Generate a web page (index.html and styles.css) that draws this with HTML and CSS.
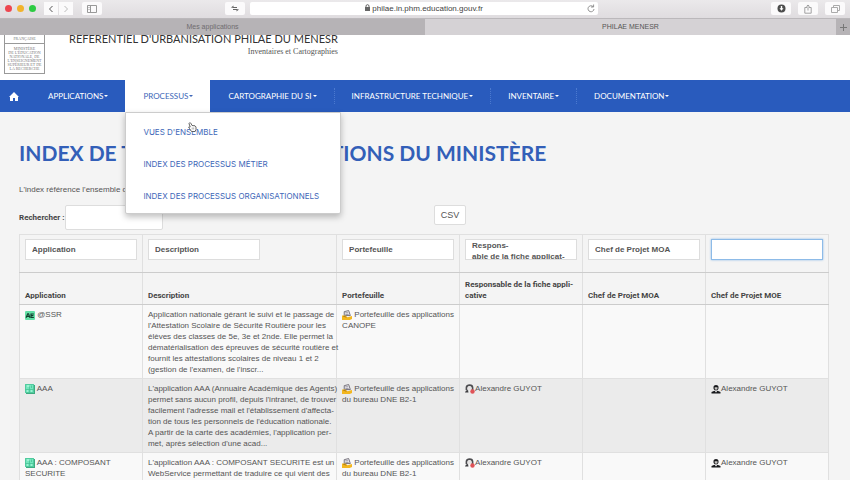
FILE: index.html
```html
<!DOCTYPE html>
<html lang="fr">
<head>
    <meta charset="UTF-8">
    <meta name="viewport" content="width=device-width, initial-scale=1.0">
    <title>PHILAE MENESR</title>
    <link rel="stylesheet" href="styles.css">
</head>
<body>
    <!-- icons used several times -->
    <svg class="sprite" aria-hidden="true">
        <symbol id="icon-ae" viewBox="0 0 9 9">
            <rect x="0" y="1" width="9" height="8" rx="1" fill="#62dfa5"/>
            <path d="M1 7L2.4 3.4H3.2L4.4 7M1.7 5.7H4M8 3.6H5.4V6.7H8M5.4 5.1H7.6" fill="none" stroke="#123d2c" stroke-width="1"/>
        </symbol>
        <symbol id="icon-app" viewBox="0 0 10 10">
            <rect x="1" y="1" width="9" height="9" fill="#3dab80"/>
            <rect x="0" y="0" width="9" height="9" fill="#74e6bd"/>
            <path d="M.5 .5H8.5V8.5H.5ZM.5 5.5H8.5M4.5 2.5V8.5M6.5 1.5V4" fill="none" stroke="#42bd90" stroke-width=".7"/>
            <path d="M2 2H4M2 7H3M6 7H7" stroke="#c9fbe6"/>
        </symbol>
        <symbol id="icon-portfolio" viewBox="0 0 9 9">
            <path d="M2 1.5L6 .5L7.5 5H2Z" fill="#ececf2" stroke="#6a6570" stroke-width=".8"/>
            <path d="M3 2.5H5.5M3 4H6" stroke="#77717d" stroke-width=".6"/>
            <path d="M0 5L3 5L5 6.5L9 5.5V8L7 9H0Z" fill="#f3b71f"/>
            <path d="M1 5.5L4 6.5" stroke="#a4700f" stroke-width=".7"/>
        </symbol>
        <symbol id="icon-owner" viewBox="0 0 10 10">
            <path d="M1.5 6V3.5C1.5 .2 7.5 .2 7.5 3.5V6" fill="none" stroke="#4d4d50" stroke-width="1.8"/>
            <circle cx="4.5" cy="4.2" r="2" fill="#e6e4e4"/>
            <path d="M0 8.5L1 6.5L3 6L3.5 8.5Z" fill="#3d3d40"/>
            <circle cx="7.5" cy="7.5" r="2.2" fill="#df5358"/>
        </symbol>
        <symbol id="icon-manager" viewBox="0 0 9 10">
            <path d="M2 3C2 .2 7 .2 7 3V4.5C6.5 7 2.5 7 2 4.5Z" fill="#17181b"/>
            <path d="M3.2 3.3H6V4.8C5.5 6 3.7 6 3.2 4.8Z" fill="#c7c4c2"/>
            <path d="M0 9.5V8L3 6.8L4.5 8L6 6.8L9 8V9.5Z" fill="#17181b"/>
            <path d="M4 7L4.5 9L5 7Z" fill="#fff"/>
        </symbol>
    </svg>

    <header class="browser">
        <div class="toolbar">
            <div class="lights">
                <span class="light red"></span>
                <span class="light yellow"></span>
                <span class="light green"></span>
            </div>
            <div class="history">
                <button type="button" aria-label="Précédent"><svg width="6" height="8" viewBox="0 0 6 8"><path d="M4.5 1L1.5 4L4.5 7" fill="none" stroke="#555" stroke-width="1"/></svg></button>
                <button type="button" aria-label="Suivant"><svg width="6" height="8" viewBox="0 0 6 8"><path d="M1.5 1L4.5 4L1.5 7" fill="none" stroke="#bbb" stroke-width="1"/></svg></button>
            </div>
            <button type="button" class="tool" aria-label="Barre latérale"><svg width="10" height="8" viewBox="0 0 10 8"><path d="M.5 .5H9.5V7.5H.5ZM3.5 .5V7.5M1.5 2.5H2.5M1.5 4.5H2.5" fill="none" stroke="#999"/></svg></button>
            <div class="location">
                <button type="button" class="tool" aria-label="Réglages"><svg width="8" height="7" viewBox="0 0 8 7"><path d="M6 2.5H2M2 4.5H6" stroke="#666"/><path d="M0 2.5L2.5 .5V3ZM8 4.5L5.5 4V6.5Z" fill="#666"/></svg></button>
                <div class="address">
                    <span class="url">
                        <svg width="5" height="7" viewBox="0 0 5 7"><path d="M1 3V2C1 .2 4 .2 4 2V3" fill="none" stroke="#666"/><rect y="3" width="5" height="4" fill="#666"/></svg>
                        philae.in.phm.education.gouv.fr
                    </span>
                    <button type="button" class="reload" aria-label="Recharger"><svg width="8" height="9" viewBox="0 0 8 9"><path d="M6 2.5A3 3 0 1 0 7 5" fill="none" stroke="#777" stroke-width=".8"/><path d="M4 3H6.6V.5" fill="none" stroke="#777" stroke-width=".8"/></svg></button>
                </div>
            </div>
            <div class="tools">
                <button type="button" class="tool" aria-label="Téléchargements"><svg width="9" height="9" viewBox="0 0 9 9"><circle cx="4.5" cy="4.5" r="4" fill="#4c4c4c"/><path d="M4.5 2V5" stroke="#fff" stroke-width="1.4"/><path d="M2.5 4.3H6.5L4.5 6.8Z" fill="#fff"/></svg></button>
                <button type="button" class="tool" aria-label="Partager"><svg width="8" height="10" viewBox="0 0 8 10"><path d="M3 3.5H.8V9.2H7.2V3.5H5M4 6.5V1M2.4 2.5L4 1L5.6 2.5" fill="none" stroke="#999" stroke-width=".9"/></svg></button>
                <button type="button" class="tool" aria-label="Onglets"><svg width="9" height="8" viewBox="0 0 9 8"><path d="M.5 2.5H6.5V7.5H.5ZM2.5 2.5V.5H8.5V5.5H6.5" fill="none" stroke="#aaa"/></svg></button>
            </div>
        </div>
        <div class="tabs">
            <a href="#" class="tab">Mes applications</a>
            <a href="#" class="tab active">PHILAE MENESR</a>
            <button type="button" class="new-tab" aria-label="Nouvel onglet"><svg width="7" height="7" viewBox="0 0 7 7"><path d="M3.5 0V7M0 3.5H7" stroke="#777"/></svg></button>
        </div>
    </header>

    <div class="banner">
        <div class="logo">
            <p>FRANÇAISE</p>
            <p>MINISTÈRE<br>DE L'ÉDUCATION<br>NATIONALE, DE<br>L'ENSEIGNEMENT<br>SUPÉRIEUR ET DE<br>LA RECHERCHE</p>
        </div>
        <div class="site-title">
            <p class="name">RÉFÉRENTIEL D'URBANISATION PHILAE DU MENESR</p>
            <p class="baseline">Inventaires et Cartographies</p>
        </div>
    </div>

    <nav class="menu">
        <a href="#" class="home" aria-label="Accueil"><svg width="10" height="9" viewBox="0 0 10 9"><path d="M5 0L10 5H9V9H6V6H4V9H1V5H0Z" fill="#fff"/></svg></a>
        <a href="#" class="item">APPLICATIONS<span class="caret"></span></a>
        <div class="dropdown">
            <a href="#" class="item open">PROCESSUS<span class="caret"></span></a>
            <div class="submenu">
                <a href="#">VUES D'ENSEMBLE</a>
                <a href="#">INDEX DES PROCESSUS MÉTIER</a>
                <a href="#">INDEX DES PROCESSUS ORGANISATIONNELS</a>
                <svg class="pointer" width="9" height="10" viewBox="0 0 9 10"><path d="M1 1.5C1.5 .3 2.5 .6 3 1.5L4 3.5L7 3.8L8 5V7.5L7 9.5H3.5L1.5 6.5L.6 5.2L2.2 5Z" fill="#fff" stroke="#555" stroke-width=".9"/><path d="M4.2 5.5V7.5M5.7 5.5V7.5" stroke="#777" stroke-width=".6"/></svg>
            </div>
        </div>
        <a href="#" class="item">CARTOGRAPHIE DU SI<span class="caret"></span></a>
        <a href="#" class="item">INFRASTRUCTURE TECHNIQUE<span class="caret"></span></a>
        <a href="#" class="item">INVENTAIRE<span class="caret"></span></a>
        <a href="#" class="item">DOCUMENTATION<span class="caret"></span></a>
    </nav>

    <main>
        <h1>INDEX DE TOUTES LES APPLICATIONS DU MINISTÈRE</h1>
        <p class="intro">L'index référence l'ensemble des applications</p>

        <div class="table-tools">
            <div class="search">
                <label for="search">Rechercher :</label>
                <input type="text" id="search">
            </div>
            <button type="button" class="csv">CSV</button>
        </div>

        <table>
            <colgroup>
                <col class="col-app">
                <col class="col-desc">
                <col class="col-std">
                <col class="col-std">
                <col class="col-std">
                <col class="col-std">
            </colgroup>
            <thead>
                <tr class="filters">
                    <td><input type="text" aria-label="Application" value="Application"></td>
                    <td><input type="text" aria-label="Description" value="Description"></td>
                    <td><input type="text" aria-label="Portefeuille" value="Portefeuille"></td>
                    <td><textarea aria-label="Responsable de la fiche applicative">Respons-
able de la fiche applicat-
ive</textarea></td>
                    <td><input type="text" aria-label="Chef de Projet MOA" value="Chef de Projet MOA"></td>
                    <td><input type="text" class="focused" aria-label="Chef de Projet MOE"></td>
                </tr>
                <tr class="titles">
                    <th>Application</th>
                    <th>Description</th>
                    <th>Portefeuille</th>
                    <th>Responsable de la fiche appli-<br>cative</th>
                    <th>Chef de Projet MOA</th>
                    <th>Chef de Projet MOE</th>
                </tr>
            </thead>
            <tbody>
                <tr>
                    <td><svg class="icon"><use href="#icon-ae"/></svg> @SSR</td>
                    <td class="description">Application nationale gérant le suivi et le passage de<br>l'Attestation Scolaire de Sécurité Routière pour les<br>élèves des classes de 5e, 3e et 2nde. Elle permet la<br>dématérialisation des épreuves de sécurité routière et<br>fournit les attestations scolaires de niveau 1 et 2<br>(gestion de l'examen, de l'inscr...</td>
                    <td><svg class="icon"><use href="#icon-portfolio"/></svg> Portefeuille des applications CANOPE</td>
                    <td></td>
                    <td></td>
                    <td></td>
                </tr>
                <tr>
                    <td><svg class="icon"><use href="#icon-app"/></svg> AAA</td>
                    <td class="description">L'application AAA (Annuaire Académique des Agents)<br>permet sans aucun profil, depuis l'intranet, de trouver<br>facilement l'adresse mail et l'établissement d'affecta-<br>tion de tous les personnels de l'éducation nationale.<br>A partir de la carte des académies, l'application per-<br>met, après sélection d'une acad...</td>
                    <td><svg class="icon"><use href="#icon-portfolio"/></svg> Portefeuille des applications du bureau DNE B2-1</td>
                    <td><svg class="icon"><use href="#icon-owner"/></svg>Alexandre GUYOT</td>
                    <td></td>
                    <td><svg class="icon"><use href="#icon-manager"/></svg>Alexandre GUYOT</td>
                </tr>
                <tr>
                    <td><svg class="icon"><use href="#icon-app"/></svg> AAA : COMPOSANT SECURITE</td>
                    <td class="description">L'application AAA : COMPOSANT SECURITE est un<br>WebService permettant de traduire ce qui vient des</td>
                    <td><svg class="icon"><use href="#icon-portfolio"/></svg> Portefeuille des applications du bureau DNE B2-1</td>
                    <td><svg class="icon"><use href="#icon-owner"/></svg>Alexandre GUYOT</td>
                    <td></td>
                    <td><svg class="icon"><use href="#icon-manager"/></svg>Alexandre GUYOT</td>
                </tr>
            </tbody>
        </table>
    </main>
</body>
</html>
```
FILE: styles.css
```css
* {
    box-sizing: border-box;
}

body {
    margin: 0;
    height: 100vh;
    overflow: hidden;
    background: #f4f4f4;
    color: #555;
    font-family: "Liberation Sans", Arial, sans-serif;
    font-size: 8px;
    line-height: 11px;
}

p, h1 {
    margin: 0;
}

a {
    text-decoration: none;
}

button {
    display: flex;
    align-items: center;
    justify-content: center;
    padding: 0;
    border: 0;
    background: #fbfafb;
    font: inherit;
}

input, textarea {
    font: inherit;
    color: inherit;
    border: 1px solid #ddd;
    background: #fff;
}

.sprite {
    display: none;
}

/* browser window */

.toolbar {
    display: flex;
    align-items: center;
    height: 19px;
    padding: 0 5px 1px;
    background: linear-gradient(#ebe9eb, #dfdcdf);
    border-bottom: 1px solid #bbb8bb;
}

.lights {
    display: flex;
    gap: 5px;
    margin-right: 8px;
}

.light {
    width: 7px;
    height: 7px;
    border-radius: 50%;
}

.red { background: #ee4650; }
.yellow { background: #f2b32c; }
.green { background: #2dcb43; }

.history {
    display: flex;
    gap: 1px;
    margin-right: 9px;
}

.history button {
    width: 14px;
    height: 13px;
}

.tool {
    width: 20px;
    height: 13px;
    border-radius: 2px;
}

.location {
    display: flex;
    flex: 1;
    gap: 5px;
    margin: 0 173px 0 123px;
}

.address {
    display: flex;
    flex: 1;
    align-items: center;
    height: 13px;
    padding: 0 3px 0 11px;
    border-radius: 2px;
    background: #fff;
    color: #444;
}

.url {
    flex: 1;
    text-align: center;
}

.reload {
    background: none;
}

.tools {
    display: flex;
    gap: 7px;
}

.tabs {
    display: flex;
    height: 16px;
    background: #b6b3b6;
    line-height: 16px;
}

.tab {
    width: 50%;
    text-align: center;
    color: #6f6c6f;
    font-size: 7px;
}

.tab.active {
    flex: 1;
    background: #d5d2d5;
    color: #555;
}

.new-tab {
    width: 14px;
    background: #b6b3b6;
}

/* site header */

.banner {
    display: flex;
    align-items: flex-end;
    height: 45px;
    padding: 0 4px 6px;
    overflow: hidden;
    background: #fff;
}

.logo {
    width: 41px;
    margin-right: 24px;
    border: 1px solid #999;
    color: #777;
    font-family: "Liberation Serif", serif;
    font-size: 4px;
    line-height: 4px;
    text-align: center;
}

.logo p {
    padding: 3px 0 2px;
}

.logo p + p {
    border-top: 1px solid #999;
}

.site-title {
    padding-bottom: 17px;
    text-align: right;
}

.name {
    color: #333;
    font-family: Lato, sans-serif;
    font-size: 11px;
    line-height: 14px;
}

.baseline {
    color: #555;
    font-family: "Liberation Serif", serif;
    line-height: 11px;
}

/* main menu */

.menu {
    display: flex;
    height: 32px;
    background: #295bbd;
    font-family: Lato, sans-serif;
    line-height: 32px;
}

.menu .home {
    display: flex;
    align-items: center;
    padding: 0 11px 0 9px;
}

.item {
    display: block;
    position: relative;
    padding: 0 17px 0 18px;
    color: #fff;
}

.item + .item::before {
    content: "";
    position: absolute;
    left: 0;
    top: 8px;
    bottom: 8px;
    border-left: 1px dotted #4b79cf;
}

.item.open {
    background: #fff;
    color: #3e67b8;
}

.caret {
    display: inline-block;
    margin-left: 1px;
    border: 2px solid transparent;
    border-top-color: currentColor;
    border-bottom: 0;
    vertical-align: 2px;
}

.dropdown {
    position: relative;
}

.submenu {
    position: absolute;
    z-index: 1;
    top: 100%;
    left: 0;
    padding: 3px 21px 1px 17px;
    background: #fff;
    border: 1px solid #ccc;
    border-radius: 0 0 2px 2px;
    box-shadow: 0 3px 6px rgba(0, 0, 0, .25);
    font-family: Inter, sans-serif;
    white-space: nowrap;
}

.submenu a {
    display: block;
    color: #3e67b8;
}

.pointer {
    position: absolute;
    top: 9px;
    left: 62px;
}

/* content */

main {
    padding: 27px 21px 0 19px;
}

h1 {
    color: #335fb8;
    font-family: Lato, sans-serif;
    font-size: 21px;
    font-weight: bold;
    line-height: 28px;
}

.intro {
    margin: 17px 0 10px;
}

.table-tools {
    display: grid;
    grid-template-columns: 8fr auto 7fr;
    align-items: start;
    margin-bottom: 4px;
}

.search {
    display: flex;
    align-items: center;
    gap: 1px;
    color: #444;
    font-family: Roboto, sans-serif;
    font-weight: bold;
}

.search input {
    width: 98px;
    height: 25px;
    border-radius: 2px;
}

.csv {
    width: 32px;
    height: 20px;
    border: 1px solid #ddd;
    border-radius: 2px;
    background: #fff;
    color: #555;
    font-size: 9px;
}

table {
    width: 100%;
    border-collapse: collapse;
    table-layout: fixed;
}

.col-app { width: 15.2%; }
.col-desc { width: 24%; }

td, th {
    padding: 4px 4px 3px 5px;
    border: 1px solid #e0e0e0;
    text-align: left;
    vertical-align: top;
}

.filters td {
    height: 38px;
    border-bottom-color: #ccc;
}

.filters input, .filters textarea {
    display: block;
    width: 112px;
    height: 21px;
    padding: 0 6px;
    font-weight: bold;
}

.filters textarea {
    overflow: hidden;
    resize: none;
    white-space: pre;
}

.filters .focused {
    border-color: #8dbbe8;
    box-shadow: 0 0 2px #8dbbe8;
}

.titles th {
    height: 32px;
    border-bottom-color: #ccc;
    color: #444;
    font-family: Roboto, sans-serif;
    vertical-align: bottom;
}

tbody tr {
    height: 74px;
    background: #f9f9f9;
}

tbody tr:nth-child(even) {
    background: #ebebeb;
}

.description {
    padding-right: 0;
    white-space: nowrap;
}

.icon {
    width: 10px;
    height: 10px;
    margin: -2px 0;
    vertical-align: -1px;
}
```
